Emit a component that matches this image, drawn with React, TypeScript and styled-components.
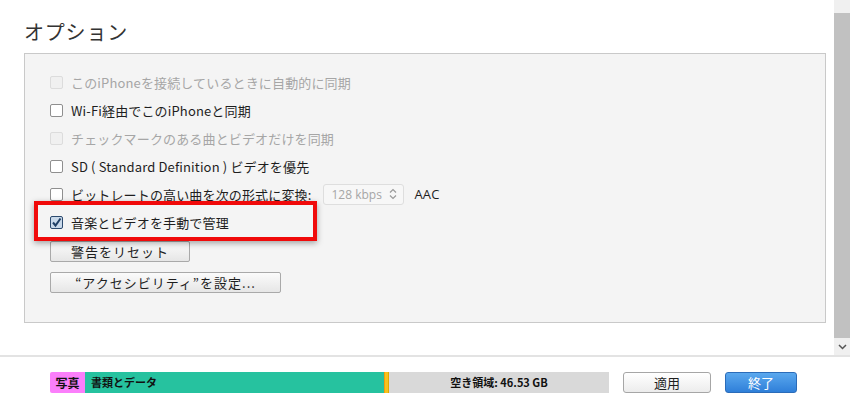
import React from "react";
import styled, { createGlobalStyle, css } from "styled-components";

const Global = createGlobalStyle`
  html, body { margin: 0; padding: 0; background: #ffffff; }
  body { font-family: "Noto Sans CJK JP", "Open Sans", sans-serif; }
`;

const Page = styled.div`
  width: 850px;
  height: 407px;
  display: flex;
  flex-direction: column;
  overflow: hidden;
  background: #ffffff;
`;

const Main = styled.div`
  display: flex;
  height: 355px;
`;

const Content = styled.div`
  flex: 1;
  padding: 0 8px 0 24px;
`;

const Title = styled.h2`
  margin: 0;
  height: 53px;
  box-sizing: border-box;
  padding-top: 18px;
  font-size: 20px;
  font-weight: 400;
  line-height: 28px;
  color: #333333;
  letter-spacing: 0.8px;
`;

const Panel = styled.div`
  height: 270px;
  box-sizing: border-box;
  border: 1px solid #c9c9c9;
  background: #f4f4f4;
  padding: 14px 25px 0;
  display: flex;
  flex-direction: column;
`;

const Row = styled.div<{ $disabled?: boolean }>`
  position: relative;
  height: 28px;
  display: flex;
  align-items: center;
  gap: 8px;
  font-size: 13px;
  letter-spacing: 0.15px;
  color: ${(p) => (p.$disabled ? "#a6a6a6" : "#1e1e1e")};
  white-space: nowrap;
`;

const Box = styled.span<{ $disabled?: boolean; $checked?: boolean }>`
  width: 13px;
  height: 13px;
  box-sizing: border-box;
  border-radius: 2px;
  flex: none;
  display: flex;
  align-items: center;
  justify-content: center;
  ${(p) =>
    p.$checked
      ? css`
          border: 1px solid #2c4a6e;
          background: #c9d9ea;
        `
      : p.$disabled
      ? css`
          border: 1px solid #dcdcdc;
          background: #f0f0f0;
        `
      : css`
          border: 1px solid #8f8f8f;
          background: #ffffff;
        `}
`;

const Select = styled.span`
  margin-left: 4px;
  height: 21px;
  width: 81px;
  box-sizing: border-box;
  border: 1px solid #dedede;
  border-radius: 3px;
  background: #f7f7f7;
  display: flex;
  align-items: center;
  justify-content: space-between;
  padding: 0 6px 0 7px;
  color: #a6a6a6;
  font-family: "Open Sans", "Noto Sans CJK JP", sans-serif;
  font-size: 12px;
  letter-spacing: 0;
`;

const Plain = styled.span`
  color: #1e1e1e;
  margin-left: 2px;
  font-family: "Open Sans", sans-serif;
`;

const Highlight = styled.div`
  position: absolute;
  left: -16px;
  top: -7px;
  width: 283px;
  height: 40px;
  box-sizing: border-box;
  border: 4px solid #f00a0a;
  box-shadow: 0 2px 6px rgba(0, 0, 0, 0.35);
  pointer-events: none;
`;

const Buttons = styled.div`
  display: flex;
  flex-direction: column;
  align-items: flex-start;
  gap: 10px;
  margin-top: 5px;
`;

const PanelButton = styled.button<{ $w: number }>`
  width: ${(p) => p.$w}px;
  height: 21px;
  box-sizing: border-box;
  border: 1px solid #a9a9a9;
  border-radius: 2px;
  background: linear-gradient(#fbfbfb, #e6e6e6);
  font-family: "Noto Sans CJK JP", sans-serif;
  font-size: 13px;
  color: #1e1e1e;
  padding: 0;
  line-height: 18px;
  letter-spacing: 1px;
`;

const Scrollbar = styled.div`
  width: 16px;
  display: flex;
  flex-direction: column;
  background: #f0f0f0;
`;

const ScrollCap = styled.div`
  height: 13px;
  background: #f0f0f0;
`;

const Thumb = styled.div`
  flex: 1;
  background: #c1c1c1;
`;

const ScrollArrow = styled.div`
  height: 17px;
  display: flex;
  align-items: center;
  justify-content: center;
  background: #f0f0f0;
`;

const Footer = styled.div`
  flex: 1;
  border-top: 2px solid #e3e3e3;
  display: flex;
  align-items: flex-start;
  padding: 15px 0 0 50px;
  gap: 14px;
`;

const Storage = styled.div`
  width: 559px;
  height: 21px;
  display: flex;
  font-size: 11px;
  font-weight: 700;
  color: #111;
  line-height: 21px;
`;

const Segment = styled.div<{ $bg: string; $w?: number }>`
  background: ${(p) => p.$bg};
  ${(p) => (p.$w !== undefined ? `width: ${p.$w}px;` : "flex: 1;")}
  flex-shrink: 0;
  white-space: nowrap;
  overflow: hidden;
  box-sizing: border-box;
`;

const PhotoSeg = styled(Segment)`
  text-align: center;
  border-radius: 2px 0 0 2px;
  font-size: 12px;
`;

const DocSeg = styled(Segment)`
  padding-left: 6px;
`;

const OtherSeg = styled(Segment)`
  border-left: 1px solid #f59b0a;
  border-right: 1px solid #e2a800;
`;

const FreeSeg = styled(Segment)`
  text-align: center;
`;

const FooterButton = styled.button<{ $primary?: boolean; $w: number }>`
  width: ${(p) => p.$w}px;
  height: 21px;
  box-sizing: border-box;
  border-radius: 3px;
  padding: 0;
  font-family: "Noto Sans CJK JP", sans-serif;
  font-size: 13px;
  line-height: 18px;
  ${(p) =>
    p.$primary
      ? css`
          border: 1px solid #2b6cb9;
          background: linear-gradient(#5aa8ee, #2f7fd9);
          color: #ffffff;
        `
      : css`
          border: 1px solid #a6a6a6;
          background: linear-gradient(#ffffff, #ececec);
          color: #1e1e1e;
        `}
`;

const Check = () => (
  <svg width="11" height="11" viewBox="0 0 11 11">
    <path d="M2 5.5 L4.5 8.5 L9.5 1.5" fill="none" stroke="#1f3f66" strokeWidth="2" />
  </svg>
);

const Updown = () => (
  <svg width="8" height="12" viewBox="0 0 8 12">
    <path d="M1 4.5 L4 1.5 L7 4.5 M1 7.5 L4 10.5 L7 7.5" fill="none" stroke="#9a9a9a" strokeWidth="1.2" />
  </svg>
);

const Chevron = () => (
  <svg width="9" height="6" viewBox="0 0 9 6">
    <path d="M1 1 L4.5 4.5 L8 1" fill="none" stroke="#555" strokeWidth="1.5" />
  </svg>
);

type Opt = { label: React.ReactNode; disabled?: boolean };

export default function App() {
  const options: Opt[] = [
    { label: "このiPhoneを接続しているときに自動的に同期", disabled: true },
    { label: "Wi-Fi経由でこのiPhoneと同期" },
    { label: "チェックマークのある曲とビデオだけを同期", disabled: true },
    { label: "SD ( Standard Definition ) ビデオを優先" },
  ];
  return (
    <Page>
      <Global />
      <Main>
        <Content>
          <Title>オプション</Title>
          <Panel>
            {options.map((o, i) => (
              <Row key={i} $disabled={o.disabled}>
                <Box $disabled={o.disabled} />
                <span>{o.label}</span>
              </Row>
            ))}
            <Row>
              <Box />
              <span>ビットレートの高い曲を次の形式に変換:</span>
              <Select>
                <span>128 kbps</span>
                <Updown />
              </Select>
              <Plain>AAC</Plain>
            </Row>
            <Row>
              <Box $checked>
                <Check />
              </Box>
              <span>音楽とビデオを手動で管理</span>
              <Highlight />
            </Row>
            <Buttons>
              <PanelButton $w={140}>警告をリセット</PanelButton>
              <PanelButton $w={231}>“アクセシビリティ”を設定...</PanelButton>
            </Buttons>
          </Panel>
        </Content>
        <Scrollbar>
          <ScrollCap />
          <Thumb />
          <ScrollArrow>
            <Chevron />
          </ScrollArrow>
        </Scrollbar>
      </Main>
      <Footer>
        <Storage>
          <PhotoSeg $bg="#fb7ffb" $w={35}>写真</PhotoSeg>
          <DocSeg $bg="#26c29f" $w={299}>書類とデータ</DocSeg>
          <OtherSeg $bg="#f7c21d" $w={5} />
          <FreeSeg $bg="#d9d9d9">空き領域: 46.53 GB</FreeSeg>
        </Storage>
        <FooterButton $w={88}>適用</FooterButton>
        <FooterButton $primary $w={72}>終了</FooterButton>
      </Footer>
    </Page>
  );
}
